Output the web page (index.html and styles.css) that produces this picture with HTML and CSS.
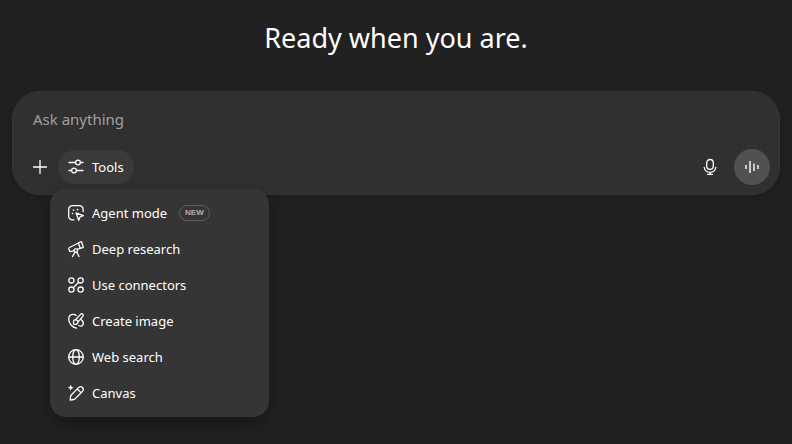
FILE: index.html
```html
<!DOCTYPE html>
<html lang="en">
<head>
    <meta charset="UTF-8">
    <meta name="viewport" content="width=device-width, initial-scale=1.0">
    <title>New chat</title>
    <link rel="stylesheet" href="styles.css">
</head>
<body>
    <main class="page">
        <h1>Ready when you are.</h1>

        <form class="composer">
            <input type="text" class="prompt" placeholder="Ask anything" aria-label="Ask anything">
            <div class="toolbar">
                <button type="button" class="icon-button" aria-label="Add files">
                    <svg class="icon" viewBox="0 0 16 16"><path d="M8 1.500v13M1.500 8h13"/></svg>
                </button>
                <div class="tools">
                    <button type="button" class="tools-button" aria-expanded="true">
                        <svg class="icon" viewBox="0 0 16 16"><path d="M1 3.500h6.500M12.500 3.500H15M1 11.500h2.500M8.500 11.500H15"/><circle cx="10" cy="3.500" r="2.400"/><circle cx="6" cy="11.500" r="2.400"/></svg>
                        Tools
                    </button>
                    <div class="menu">
                        <button type="button" class="menu-item">
                            <svg class="icon" viewBox="0 0 16 16"><path d="M6 14.800H4.300A3.600 3.600 0 0 1 .7 11.200V4.300A3.600 3.600 0 0 1 4.300.7h7.200a3.600 3.600 0 0 1 3.600 3.600V6.500"/><path d="M8 7.800l7.300 2.900-3.300 1.300-1.300 3.300z"/><path class="dots" d="M5.500 5v.3M9.500 4.500v.3M4.500 8.500h.1"/></svg>
                            Agent mode
                            <span class="badge">NEW</span>
                        </button>
                        <button type="button" class="menu-item">
                            <svg class="icon" viewBox="0 0 16 16"><path d="M10.400 2l2.200-1.200c.5-.2.900-.1 1.100.4l1.500 4.500c.2.500 0 .9-.5 1l-2.500.6zM10.400 2L1.500 6.500a1.200 1.200 0 0 0-.7 1.500l.7 1.800a1.200 1.200 0 0 0 1.500.7l3-.9M9.500 8.200l2.700-.9"/><circle cx="7.800" cy="9.600" r="1.800"/><path d="M6.800 11.300l-2.200 4.200M8.800 11.300l2.200 4.200"/></svg>
                            Deep research
                        </button>
                        <button type="button" class="menu-item">
                            <svg class="icon" viewBox="0 0 16 16"><circle cx="3.400" cy="3.400" r="2.600"/><circle cx="12.600" cy="3.400" r="2.600"/><circle cx="3.400" cy="12.600" r="2.600"/><circle cx="12.600" cy="12.600" r="2.600"/><path d="M10.700 5.300l-5.400 5.400"/></svg>
                            Use connectors
                        </button>
                        <button type="button" class="menu-item">
                            <svg class="icon" viewBox="0 0 16 16"><path d="M8.500 15.200C4.300 14.300.7 10.500.7 6 .7 3 2.500 1.300 5 1.300c1.300 0 2.300.4 3.200 1.100"/><path d="M7.500 6.800l4.800-5.200c.8-.9 1.700-1.200 2.400-.6.800.6.700 1.500.1 2.400L10.300 8.600"/><path d="M5.500 11c.5-.7-.2-1.500 0-2.600.2-1.200 1.200-1.900 2.400-1.600 1.600.4 2.600 1.900 1.900 3.100-.8 1.400-2.800 1.800-4.300 1.100z"/><path d="M13 6.500c2 1.400 2.600 3.400 2.100 5-.5 1.800-2.300 2-4.300 1"/></svg>
                            Create image
                        </button>
                        <button type="button" class="menu-item">
                            <svg class="icon" viewBox="0 0 16 16"><circle cx="8" cy="8" r="7.300"/><ellipse cx="8" cy="8" rx="3.300" ry="7.300"/><path d="M.7 8h14.600"/></svg>
                            Web search
                        </button>
                        <button type="button" class="menu-item">
                            <svg class="icon" viewBox="0 0 16 16"><path d="M2.200 15.200l.4-3.800c.1-.7.400-1.200.9-1.700l7.300-7.300a2.700 2.700 0 0 1 3.800 3.800l-7.300 7.400c-.5.500-1 .8-1.600.9zM9.400 4l3.600 3.600"/><path class="spark" d="M2.700-.3l.9 2.100 2.100.9-2.100.9-.9 2.100-.9-2.100-2.100-.9 2.100-.9z"/></svg>
                            Canvas
                        </button>
                    </div>
                </div>
                <button type="button" class="icon-button dictate" aria-label="Dictate">
                    <svg class="icon" viewBox="0 0 16 16"><rect x="4.700" y="0.500" width="6.600" height="9.800" rx="3.300"/><path d="M2.200 8.500a5.900 5.900 0 0 0 11.600 0M8 13.300v2M5.500 15.300h5"/></svg>
                </button>
                <button type="button" class="icon-button voice" aria-label="Voice mode">
                    <svg class="icon" viewBox="0 0 16 16"><path d="M2 6v4M6 2v12M10 4.500v7.500M14 6v4"/></svg>
                </button>
            </div>
        </form>
    </main>
</body>
</html>
```

FILE: styles.css
```css
* {
    box-sizing: border-box;
}

body {
    margin: 0;
    min-height: 100vh;
    background-color: #212121;
    color: #fff;
    font-family: "Segoe UI", "Noto Sans", sans-serif;
    font-size: 13px;
}

.page {
    padding: 18px 12px;
}

h1 {
    margin: 0 0 33px;
    font-size: 27px;
    font-weight: 400;
    line-height: 40px;
    text-align: center;
}

button,
input {
    border: none;
    background: none;
    color: inherit;
    font-family: inherit;
    font-size: inherit;
}

button {
    cursor: pointer;
}

.icon {
    flex: none;
    width: 16px;
    height: 16px;
    overflow: visible;
    fill: none;
    stroke: currentColor;
    stroke-width: 1.3;
    stroke-linecap: round;
    stroke-linejoin: round;
}

.composer {
    padding: 8px 9px;
    border: 1px solid #353535;
    border-radius: 28px;
    background-color: #303030;
    box-shadow: 0 4px 12px rgba(0, 0, 0, 0.15);
}

.prompt {
    display: block;
    width: 100%;
    height: 38px;
    padding: 0 11px;
    font-size: 15px;
    outline: none;
}

.prompt::placeholder {
    color: #a0a0a0;
}

.toolbar {
    display: flex;
    align-items: center;
    height: 48px;
    padding-top: 10px;
}

.icon-button {
    display: flex;
    align-items: center;
    justify-content: center;
    width: 36px;
    height: 36px;
    padding: 0;
    border-radius: 50%;
}

.tools {
    position: relative;
}

.tools-button {
    display: flex;
    align-items: center;
    gap: 8px;
    height: 34px;
    padding: 0 10px;
    border-radius: 17px;
    background-color: #3a3a3a;
}

.menu {
    position: absolute;
    top: 100%;
    left: -8px;
    width: 219px;
    margin-top: 5px;
    padding: 6px;
    border-radius: 16px;
    background-color: #353535;
    box-shadow: 0 8px 16px rgba(0, 0, 0, 0.3);
}

.menu-item {
    display: flex;
    align-items: center;
    gap: 8px;
    width: 100%;
    height: 36px;
    padding: 0 12px;
    border-radius: 10px;
}

.dots {
    stroke-width: 1.6;
}

.spark {
    fill: currentColor;
    stroke: none;
}

.badge {
    margin-left: 4px;
    padding: 0 5px;
    border: 1px solid #5c5c5c;
    border-radius: 8px;
    color: #afafaf;
    font-family: "Liberation Sans", sans-serif;
    font-size: 8px;
    font-weight: 700;
    line-height: 14px;
}

.dictate {
    margin-left: auto;
    margin-right: 6px;
}

.voice {
    background-color: #515151;
    color: #c8c8c8;
}

.voice .icon {
    stroke-width: 2;
    stroke-linecap: butt;
}
```
